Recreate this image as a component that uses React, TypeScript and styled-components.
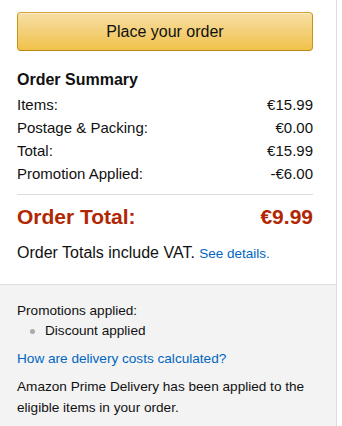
import React from "react";
import styled, { createGlobalStyle } from "styled-components";

const Global = createGlobalStyle`
  html, body { margin: 0; padding: 0; background: #fff; }
  body { font-family: Arial, "Liberation Sans", sans-serif; color: #111; }
`;

const Panel = styled.div`
  width: 337px;
  min-height: 426px;
  box-sizing: border-box;
  border-right: 1px solid #ddd;
  display: flex;
  flex-direction: column;
`;

const Top = styled.div`
  padding: 12px 23px 19px 17px;
  display: flex;
  flex-direction: column;
`;

const PlaceButton = styled.button`
  height: 39px;
  box-sizing: border-box;
  border: 1px solid;
  border-color: #d4a536 #c89411 #b7860f;
  border-radius: 4px;
  background: linear-gradient(to bottom, #f7dfa5, #f0c14b);
  box-shadow: inset 0 1px 0 rgba(255, 255, 255, 0.4);
  font-family: Arial, "Liberation Sans", sans-serif;
  font-size: 16px;
  color: #111;
  padding: 0;
  cursor: pointer;
`;

const Heading = styled.h3`
  margin: 18px 0 0;
  font-size: 16px;
  line-height: 22px;
  font-weight: 700;
  color: #111;
`;

const Rows = styled.div`
  margin-top: 1.5px;
  display: flex;
  flex-direction: column;
`;

const Row = styled.div`
  display: flex;
  justify-content: space-between;
  font-size: 15px;
  line-height: 23.3px;
  color: #111;
`;

const Divider = styled.hr`
  margin: 8px 0 0;
  border: 0;
  border-top: 1px solid #ddd;
  height: 0;
`;

const TotalRow = styled.div`
  margin-top: 9.5px;
  display: flex;
  justify-content: space-between;
  font-size: 21px;
  line-height: 26px;
  font-weight: 700;
  color: #b12704;
`;

const VatLine = styled.div`
  margin-top: 12px;
  font-size: 16px;
  line-height: 22px;
  color: #111;
`;

const Link = styled.a<{ $size?: number }>`
  color: #0066c0;
  text-decoration: none;
  font-size: ${(p) => p.$size ?? 13.5}px;
`;

const Bottom = styled.div`
  flex: 1;
  background: #f3f3f3;
  border-top: 1px solid #ddd;
  padding: 16px 23px 12px 17px;
  font-size: 13.6px;
  line-height: 20px;
  color: #111;
`;

const List = styled.ul`
  margin: 0;
  padding: 0 0 0 28px;
  list-style: none;
`;

const Item = styled.li`
  position: relative;
  &::before {
    content: "";
    position: absolute;
    left: -15px;
    top: 8px;
    width: 5px;
    height: 5px;
    border-radius: 50%;
    background: #aaa;
  }
`;

const LinkLine = styled.div`
  margin-top: 8px;
`;

const Note = styled.p`
  margin: 6.5px 0 0;
  line-height: 21px;
`;

const rows: [string, string][] = [
  ["Items:", "€15.99"],
  ["Postage & Packing:", "€0.00"],
  ["Total:", "€15.99"],
  ["Promotion Applied:", "-€6.00"],
];

export default function App() {
  return (
    <>
      <Global />
      <Panel>
        <Top>
          <PlaceButton>Place your order</PlaceButton>
          <Heading>Order Summary</Heading>
          <Rows>
            {rows.map(([l, v]) => (
              <Row key={l}>
                <span>{l}</span>
                <span>{v}</span>
              </Row>
            ))}
          </Rows>
          <Divider />
          <TotalRow>
            <span>Order Total:</span>
            <span>€9.99</span>
          </TotalRow>
          <VatLine>
            Order Totals include VAT. <Link href="#">See details.</Link>
          </VatLine>
        </Top>
        <Bottom>
          <div>Promotions applied:</div>
          <List>
            <Item>Discount applied</Item>
          </List>
          <LinkLine>
            <Link href="#" $size={13.6}>How are delivery costs calculated?</Link>
          </LinkLine>
          <Note>
            Amazon Prime Delivery has been applied to the eligible items in your
            order.
          </Note>
        </Bottom>
      </Panel>
    </>
  );
}
